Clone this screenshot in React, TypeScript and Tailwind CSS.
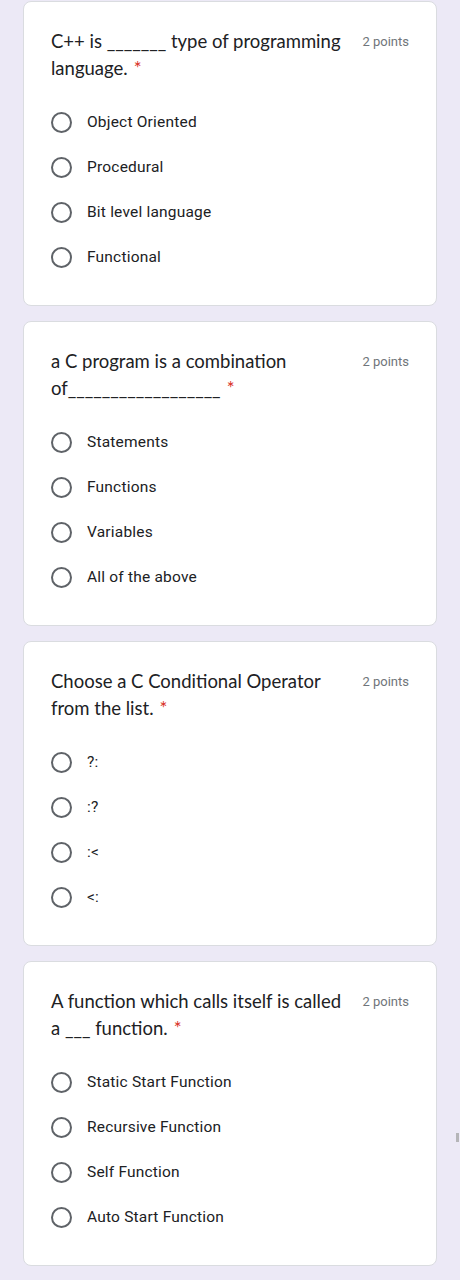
import React from "react";

type Q = { lines: string[]; options: string[] };

const questions: Q[] = [
  {
    lines: ["C++ is _______ type of programming", "language."],
    options: ["Object Oriented", "Procedural", "Bit level language", "Functional"],
  },
  {
    lines: ["a C program is a combination", "of__________________"],
    options: ["Statements", "Functions", "Variables", "All of the above"],
  },
  {
    lines: ["Choose a C Conditional Operator", "from the list."],
    options: ["?:", ":?", ":<", "<:"],
  },
  {
    lines: ["A function which calls itself is called", "a ___ function."],
    options: ["Static Start Function", "Recursive Function", "Self Function", "Auto Start Function"],
  },
];

function Card({ q }: { q: Q }) {
  return (
    <div className="h-[305px] bg-white rounded-[8px] border border-[#dadce0] pt-[26px] pl-[27px] pr-[27px]">
      <div className="flex items-start justify-between">
        <div
          className="text-[18.5px] leading-[27px] text-[#202124]"
          style={{ fontFamily: "Lato, 'Open Sans', sans-serif" }}
        >
          {q.lines[0]}
          <br />
          {q.lines[1]}
          <span className="text-[#d93025] ml-[6px]">*</span>
        </div>
        <div
          className="text-[13px] leading-[27px] text-[#70757a] whitespace-nowrap"
          style={{ fontFamily: "Roboto, sans-serif" }}
        >
          2 points
        </div>
      </div>
      <div className="mt-[18px] flex flex-col">
        {q.options.map((o) => (
          <div key={o} className="h-[45px] flex items-center">
            <div className="w-[21px] h-[21px] rounded-full border-2 border-[#5f6368] shrink-0" />
            <div
              className="ml-[15px] text-[15.5px] text-[#202124] tracking-[0.2px]"
              style={{ fontFamily: "Roboto, sans-serif" }}
            >
              {o}
            </div>
          </div>
        ))}
      </div>
    </div>
  );
}

export default function App() {
  return (
    <div className="relative w-[460px] h-[1280px] bg-[#ece9f6] pt-[1px] px-[23px] flex flex-col gap-[15px] overflow-hidden">
      {questions.map((q, i) => (
        <Card key={i} q={q} />
      ))}
      <div className="absolute right-[1px] top-[1133px] w-[3px] h-[9px] bg-[#b5b5b8]" />
    </div>
  );
}
